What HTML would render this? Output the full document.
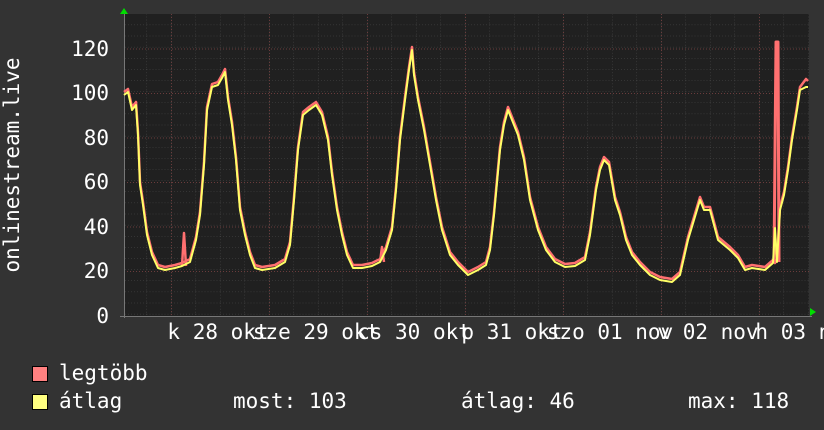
<!DOCTYPE html>
<html><head><meta charset="utf-8"><style>
html,body{margin:0;padding:0;background:#333;}
body{width:824px;height:430px;overflow:hidden;position:relative;font-family:"DejaVu Sans Mono","Liberation Mono",monospace;color:#fff;}
.t{position:absolute;font-size:21px;line-height:21px;white-space:pre;}
</style></head><body>
<svg width="824" height="430" style="position:absolute;left:0;top:0">
<defs>
<pattern id="mg" x="0" y="0" width="24.5" height="11.125" patternUnits="userSpaceOnUse" patternTransform="translate(146.5,13.5)">
<line x1="0" y1="0" x2="24.5" y2="0" stroke="#4a4a4a" stroke-width="1" stroke-dasharray="1,2"/>
<line x1="0" y1="0" x2="0" y2="11.125" stroke="#4a4a4a" stroke-width="1" stroke-dasharray="1,2"/>
</pattern>
</defs>
<rect x="124" y="14" width="685" height="302" fill="#202020"/>
<rect x="124" y="14" width="685" height="302" fill="url(#mg)"/>
<g stroke="#6a3c3c" stroke-width="1" stroke-dasharray="1,2">
<line x1="124" y1="271.5" x2="809" y2="271.5"/><line x1="124" y1="227" x2="809" y2="227"/>
<line x1="124" y1="182.5" x2="809" y2="182.5"/><line x1="124" y1="138" x2="809" y2="138"/>
<line x1="124" y1="93.5" x2="809" y2="93.5"/><line x1="124" y1="49" x2="809" y2="49"/>
<line x1="171.5" y1="14" x2="171.5" y2="316"/><line x1="269.5" y1="14" x2="269.5" y2="316"/>
<line x1="367.5" y1="14" x2="367.5" y2="316"/><line x1="465.5" y1="14" x2="465.5" y2="316"/>
<line x1="563.5" y1="14" x2="563.5" y2="316"/><line x1="661.5" y1="14" x2="661.5" y2="316"/>
<line x1="759.5" y1="14" x2="759.5" y2="316"/>
</g>
<line x1="120" y1="316.5" x2="812" y2="316.5" stroke="#777"/>
<line x1="124.5" y1="12" x2="124.5" y2="318" stroke="#777"/>
<polygon points="120,14 124,8 128,14" fill="#00dd00"/>
<polygon points="810,308 816,312 810,316" fill="#00dd00"/>
<g fill="none" stroke-linejoin="round">
<polyline transform="translate(0,-3)" stroke="#ff7070" stroke-width="2.5" points="124,95 128,92 132,110 136,105 138,135 140,185 143,205 147,235 152,255 158,268 165,270 175,268 182,266 190,262 196,240 200,215 204,165 207,110 212,87 218,85 222,78 225,72 228,100 232,125 236,160 240,210 245,235 250,255 255,268 262,270 275,268 285,262 290,245 294,200 298,150 303,115 309,110 316,105 322,115 328,140 332,175 337,210 342,235 347,255 353,268 362,268 372,266 380,262 386,250 392,230 396,190 400,140 405,100 409,70 412,50 414,75 418,100 424,130 430,165 436,200 442,230 450,255 458,265 468,275 478,270 486,265 490,250 494,215 500,150 504,125 508,110 512,120 518,135 524,160 530,200 538,230 546,250 555,262 565,267 575,266 585,260 590,235 596,190 600,170 604,160 609,165 615,200 620,215 626,240 632,255 640,265 650,275 660,280 672,282 680,275 688,240 694,220 700,200 704,210 710,210 718,240 724,245 730,250 738,258 745,270 752,268 765,270 773,263 775,266 777,262 780,210 784,195 788,170 792,140 797,110 800,90 806,82 808,84"/>
<polyline stroke="#ff7070" stroke-width="2.5" points="182,266 184,233 186,266"/>
<polyline stroke="#ff7070" stroke-width="2.5" points="380,262 382,247 384,262"/>
<polyline stroke="#ff7070" stroke-width="3" points="774,263 776,42 778,42 779,262"/>
<polyline stroke="#ffff66" stroke-width="2" points="124,95 128,92 132,110 136,105 138,135 140,185 143,205 147,235 152,255 158,268 165,270 175,268 182,266 190,262 196,240 200,215 204,165 207,110 212,87 218,85 222,78 225,72 228,100 232,125 236,160 240,210 245,235 250,255 255,268 262,270 275,268 285,262 290,245 294,200 298,150 303,115 309,110 316,105 322,115 328,140 332,175 337,210 342,235 347,255 353,268 362,268 372,266 380,262 386,250 392,230 396,190 400,140 405,100 409,70 412,50 414,75 418,100 424,130 430,165 436,200 442,230 450,255 458,265 468,275 478,270 486,265 490,250 494,215 500,150 504,125 508,110 512,120 518,135 524,160 530,200 538,230 546,250 555,262 565,267 575,266 585,260 590,235 596,190 600,170 604,160 609,165 615,200 620,215 626,240 632,255 640,265 650,275 660,280 672,282 680,275 688,240 694,220 700,200 704,210 710,210 718,240 724,245 730,250 738,258 745,270 752,268 765,270 773,263 775,228 777,262 780,210 784,195 788,170 792,140 797,110 800,90 806,87 808,87"/>
</g>
<text transform="translate(19,165) rotate(-90)" text-anchor="middle" fill="#fff" font-family="DejaVu Sans Mono, Liberation Mono, monospace" font-size="21">onlinestream.live</text>
<g fill="#fff" font-family="DejaVu Sans Mono, Liberation Mono, monospace" font-size="21" text-anchor="end">
<text x="109" y="56">120</text><text x="109" y="100">100</text><text x="109" y="145">80</text>
<text x="109" y="189">60</text><text x="109" y="234">40</text><text x="109" y="278">20</text><text x="109" y="323">0</text>
</g>
<g fill="#fff" font-family="DejaVu Sans Mono, Liberation Mono, monospace" font-size="21" text-anchor="middle">
<text x="218" y="339">k 28 okt</text><text x="316" y="339">sze 29 okt</text><text x="414" y="339">cs 30 okt</text>
<text x="512" y="339">p 31 okt</text><text x="610" y="339">szo 01 nov</text><text x="708" y="339">v 02 nov</text>
<text x="806" y="339">h 03 nov</text>
</g>
<rect x="32.5" y="366.5" width="15" height="15" fill="#ff8080" stroke="#000"/>
<rect x="32.5" y="394.5" width="15" height="15" fill="#ffff80" stroke="#000"/>
</svg>
<div class="t" style="left:59px;top:363px">legtöbb</div>
<div class="t" style="left:59px;top:391px">átlag</div>
<div class="t" style="left:233px;top:391px">most: 103</div>
<div class="t" style="left:461px;top:391px">átlag: 46</div>
<div class="t" style="left:688px;top:391px">max: 118</div>
</body></html>
